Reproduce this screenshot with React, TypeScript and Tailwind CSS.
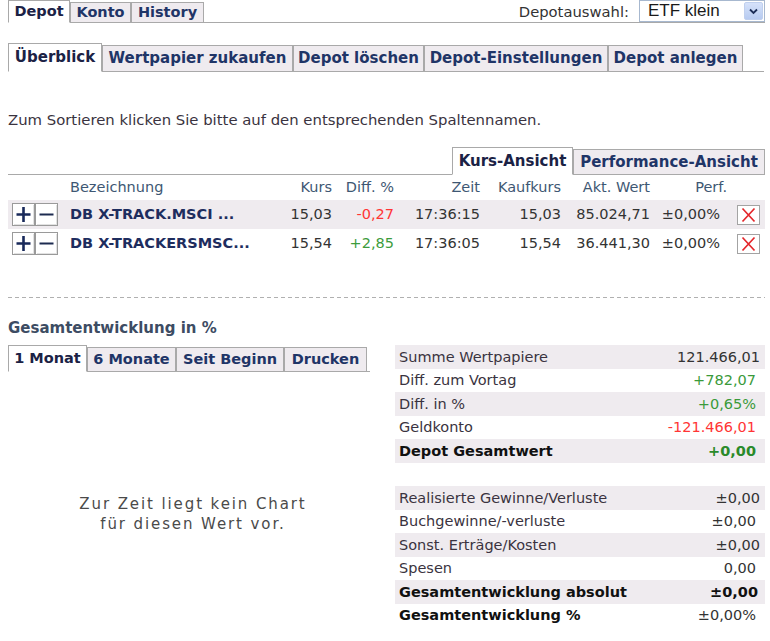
import React from "react";

const TAB_BORDER = "border-[#a9a9a9]";

function Tab({
  label,
  active,
  w,
  h,
  ih,
  size = "text-[15px]",
}: {
  label: string;
  active?: boolean;
  w: string;
  h: string;
  ih: string;
  size?: string;
}) {
  return (
    <div
      className={
        "-mb-px flex shrink-0 items-center justify-center border font-bold " +
        TAB_BORDER +
        " " +
        w +
        " " +
        size +
        " " +
        (active
          ? h + " bg-white border-b-white text-[#1b2245]"
          : ih + " bg-[#efebef] text-[#1f3567]")
      }
    >
      {label}
    </div>
  );
}

function PlusMinus() {
  return (
    <div className="flex pl-[4px]">
      <div className="flex h-[23px] w-[23px] items-center justify-center border border-[#9a9a9a] bg-white shadow-[inset_1px_1px_0_#fff,inset_-1px_-1px_0_#e2e2e2]">
        <svg width="21" height="21" viewBox="0 0 21 21">
          <path d="M3.5 10.5H17.5M10.5 3V18" stroke="#18295a" strokeWidth="2.6" fill="none" />
        </svg>
      </div>
      <div className="flex h-[23px] w-[23px] items-center justify-center border border-[#9a9a9a] bg-white shadow-[inset_1px_1px_0_#fff,inset_-1px_-1px_0_#e2e2e2]">
        <svg width="21" height="21" viewBox="0 0 21 21">
          <path d="M3.5 10.5H17.5" stroke="#1d2b50" strokeWidth="2" fill="none" />
        </svg>
      </div>
    </div>
  );
}

function XBox() {
  return (
    <div className="flex h-[20px] w-[23px] items-center justify-center border border-[#a3a3a3] bg-white">
      <svg width="21" height="18" viewBox="0 0 21 18">
        <path d="M4.5 2.5L16.5 15.5M16.5 2.5L4.5 15.5" stroke="#e4262b" strokeWidth="1.7" fill="none" />
      </svg>
    </div>
  );
}

type Pos = {
  name: string;
  kurs: string;
  diff: string;
  diffColor: string;
  zeit: string;
  kauf: string;
  wert: string;
  perf: string;
};

const positions: Pos[] = [
  {
    name: "DB X-TRACK.MSCI ...",
    kurs: "15,03",
    diff: "-0,27",
    diffColor: "text-[#ff3535]",
    zeit: "17:36:15",
    kauf: "15,03",
    wert: "85.024,71",
    perf: "±0,00%",
  },
  {
    name: "DB X-TRACKERSMSC...",
    kurs: "15,54",
    diff: "+2,85",
    diffColor: "text-[#3c9c3c]",
    zeit: "17:36:05",
    kauf: "15,54",
    wert: "36.441,30",
    perf: "±0,00%",
  },
];

type Sum = {
  label: string;
  value: string;
  gray: boolean;
  bold?: boolean;
  boldValue?: boolean;
  color?: string;
  pr: string;
};

const sums1: Sum[] = [
  { label: "Summe Wertpapiere", value: "121.466,01", gray: true, pr: "pr-[5px]" },
  { label: "Diff. zum Vortag", value: "+782,07", gray: false, color: "text-[#3a9a3a]", pr: "pr-[9px]" },
  { label: "Diff. in %", value: "+0,65%", gray: true, color: "text-[#3a9a3a]", pr: "pr-[9px]" },
  { label: "Geldkonto", value: "-121.466,01", gray: false, color: "text-[#ff3535]", pr: "pr-[9px]" },
  { label: "Depot Gesamtwert", value: "+0,00", gray: true, bold: true, boldValue: true, color: "text-[#2a8a2a]", pr: "pr-[9px]" },
];

const sums2: Sum[] = [
  { label: "Realisierte Gewinne/Verluste", value: "±0,00", gray: true, pr: "pr-[5px]" },
  { label: "Buchgewinne/-verluste", value: "±0,00", gray: false, pr: "pr-[9px]" },
  { label: "Sonst. Erträge/Kosten", value: "±0,00", gray: true, pr: "pr-[5px]" },
  { label: "Spesen", value: "0,00", gray: false, pr: "pr-[9px]" },
  { label: "Gesamtentwicklung absolut", value: "±0,00", gray: true, bold: true, boldValue: true, pr: "pr-[7px]" },
  { label: "Gesamtentwicklung %", value: "±0,00%", gray: false, bold: true, pr: "pr-[9px]" },
];

function SumTable({ rows }: { rows: Sum[] }) {
  return (
    <div className="flex flex-col">
      {rows.map((r) => (
        <div
          key={r.label}
          className={
            "flex h-[23.5px] items-center justify-between pl-[4px] " +
            r.pr +
            " " +
            (r.gray ? "bg-[#efebef]" : "bg-white")
          }
        >
          <span className={r.bold ? "font-bold text-[#111]" : "text-[#3a3340]"}>{r.label}</span>
          <span
            className={
              (r.boldValue ? "font-bold " : "") +
              (r.color ?? (r.boldValue ? "text-[#111]" : "text-[#333]"))
            }
          >
            {r.value}
          </span>
        </div>
      ))}
    </div>
  );
}

export default function App() {
  return (
    <div className="h-[641px] w-[770px] overflow-hidden bg-white font-['DejaVu_Sans',Verdana,sans-serif] text-[14.5px] leading-none text-[#333]">
      {/* top tab bar */}
      <div className={"ml-[8px] flex h-[23px] w-[757px] items-end border-b " + TAB_BORDER}>
        <Tab label="Depot" active w="w-[62px]" h="h-[23px]" ih="" size="text-[14.5px]" />
        <Tab label="Konto" w="w-[61px]" h="" ih="h-[21px]" size="text-[14.5px]" />
        <Tab label="History" w="w-[73px]" h="" ih="h-[21px]" size="text-[14.5px]" />
        <div className="flex-1" />
        <div className="flex h-[23px] items-start self-start">
          <span className="mr-[10px] mt-[5px] text-[14.75px] text-[#333]">Depotauswahl:</span>
          <div className="flex h-[22px] w-[126px] items-start justify-between border border-[#a7b8cf] bg-white">
            <span className="pl-[8px] pt-[1px] font-['Liberation_Sans',Arial,sans-serif] text-[17px] leading-[18px] text-[#1a1a1a]">
              ETF klein
            </span>
            <div className="mr-[1px] mt-[1px] flex h-[18px] w-[19px] items-center justify-center rounded-[2px] border border-[#c0d0ee] bg-[linear-gradient(#d6e2fa,#b7cbf1)]">
              <svg width="9" height="7" viewBox="0 0 9 7">
                <path d="M1 1.5L4.5 5L8 1.5" stroke="#1c2d58" strokeWidth="1.8" fill="none" />
              </svg>
            </div>
          </div>
        </div>
      </div>

      {/* second tab bar */}
      <div className={"ml-[8px] mt-[20px] flex h-[29px] w-[756px] items-end border-b " + TAB_BORDER}>
        <Tab label="Überblick" active w="w-[94px]" h="h-[29px]" ih="" />
        <Tab label="Wertpapier zukaufen" w="w-[191px]" h="" ih="h-[27px]" />
        <Tab label="Depot löschen" w="w-[131px]" h="" ih="h-[27px]" />
        <Tab label="Depot-Einstellungen" w="w-[184px]" h="" ih="h-[27px]" />
        <Tab label="Depot anlegen" w="w-[135px]" h="" ih="h-[27px]" />
      </div>

      <div className="ml-[8px] mt-[39px] text-[14.85px] leading-[18px] text-[#3a3340]">
        Zum Sortieren klicken Sie bitte auf den entsprechenden Spaltennamen.
      </div>

      {/* view tabs */}
      <div className={"ml-[8px] mt-[18px] flex h-[28px] w-[757px] items-end justify-end border-b " + TAB_BORDER}>
        <Tab label="Kurs-Ansicht" active w="w-[121px]" h="h-[28px]" ih="" />
        <Tab label="Performance-Ansicht" w="w-[192px]" h="" ih="h-[26px]" />
      </div>

      {/* header */}
      <div className="ml-[8px] flex h-[25px] w-[757px] items-center text-[#3e5773]">
        <div className="w-[62px]" />
        <div className="w-[190px]">Bezeichnung</div>
        <div className="w-[72px] text-right">Kurs</div>
        <div className="w-[62px] text-right">Diff. %</div>
        <div className="w-[86px] text-right">Zeit</div>
        <div className="w-[81px] text-right">Kaufkurs</div>
        <div className="w-[89px] text-right">Akt. Wert</div>
        <div className="w-[77px] text-right">Perf.</div>
        <div className="w-[38px]" />
      </div>

      {positions.map((p, i) => (
        <div
          key={p.name}
          className={"ml-[8px] flex h-[29px] w-[757px] items-center " + (i === 0 ? "bg-[#efebef]" : "bg-white")}
        >
          <div className="w-[62px]">
            <PlusMinus />
          </div>
          <div className="w-[190px] font-bold text-[#1e2d5e]">{p.name}</div>
          <div className="w-[72px] text-right">{p.kurs}</div>
          <div className={"w-[62px] text-right " + p.diffColor}>{p.diff}</div>
          <div className="w-[86px] text-right">{p.zeit}</div>
          <div className="w-[81px] text-right">{p.kauf}</div>
          <div className="w-[89px] text-right">{p.wert}</div>
          <div className="w-[77px] pr-[7px] text-right">{p.perf}</div>
          <div className="w-[38px] pl-[10px]">
            <XBox />
          </div>
        </div>
      ))}

      {/* dashed separator */}
      <div className="ml-[8px] mt-[39px] h-px w-[757px] bg-[repeating-linear-gradient(to_right,#b0b0b0_0,#b0b0b0_4px,transparent_4px,transparent_7px)]" />

      <div className="ml-[8px] mt-[21px] text-[15px] font-bold leading-[18px] text-[#3d4c63]">
        Gesamtentwicklung in %
      </div>

      <div className="ml-[8px] mt-[8px] flex w-[757px] gap-[25px]">
        {/* chart area */}
        <div className="flex w-[362px] flex-col">
          <div className={"flex h-[27px] items-end border-b " + TAB_BORDER}>
            <Tab label="1 Monat" active w="w-[79px]" h="h-[27px]" ih="" size="text-[14.5px]" />
            <Tab label="6 Monate" w="w-[89px]" h="" ih="h-[25px]" size="text-[14.5px]" />
            <Tab label="Seit Beginn" w="w-[108px]" h="" ih="h-[25px]" size="text-[14.5px]" />
            <Tab label="Drucken" w="w-[83px]" h="" ih="h-[25px]" size="text-[14.5px]" />
          </div>
          <div className="mt-[122px] w-[370px] text-center text-[15px] leading-[20px] tracking-[1.9px] text-[#4a4a4a]">
            <div>Zur Zeit liegt kein Chart</div>
            <div>für diesen Wert vor.</div>
          </div>
        </div>

        {/* summary tables */}
        <div className="flex w-[370px] flex-col">
          <SumTable rows={sums1} />
          <div className="h-[23.5px]" />
          <SumTable rows={sums2} />
        </div>
      </div>
    </div>
  );
}
